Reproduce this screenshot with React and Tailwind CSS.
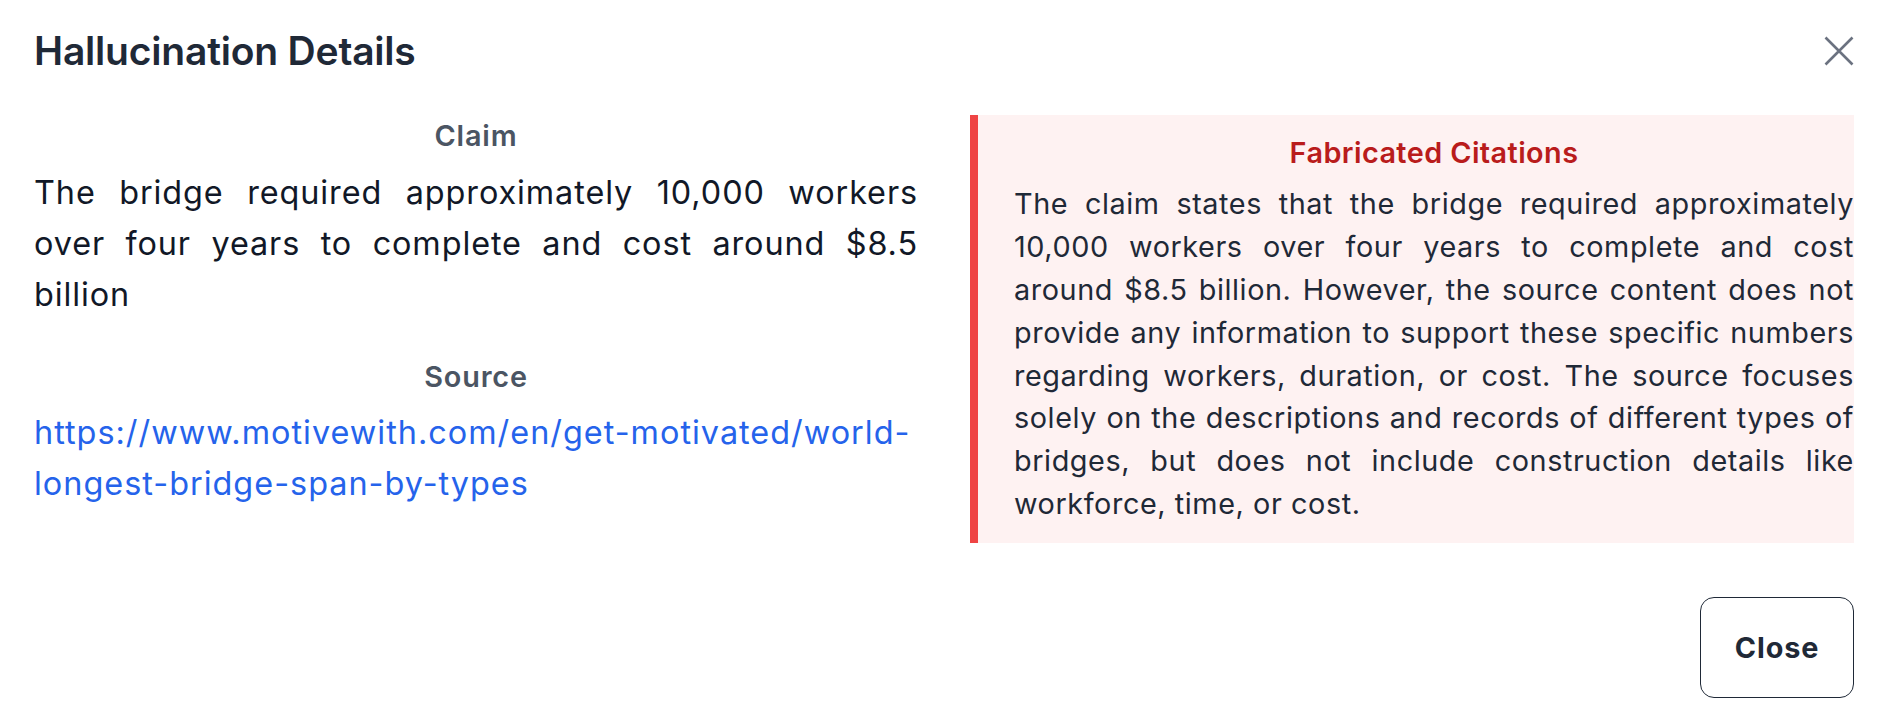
export default function App() {
  return (
    <div className="w-[1882px] h-[724px] bg-white pl-[34px] pr-[28px] font-['Inter','Noto_Sans',sans-serif] flex flex-col">
      {/* Header */}
      <div className="mt-[27px] h-[48px] flex items-center justify-between">
        <h2 className="text-[39px] leading-[48px] font-semibold text-[#1f2937] tracking-[-0.2px]">
          Hallucination Details
        </h2>
        <button className="w-[30px] h-[30px] flex items-center justify-center text-[#6b7280]" aria-label="Close">
          <svg width="30" height="30" viewBox="0 0 30 30" fill="none" stroke="currentColor" strokeWidth="2.6">
            <path d="M1.5 1.5L28.5 28.5M28.5 1.5L1.5 28.5" />
          </svg>
        </button>
      </div>

      {/* Body */}
      <div className="mt-[39px] grid grid-cols-2 gap-[52px]">
        <div className="flex flex-col">
          <p className="text-center text-[28.8px] leading-[43.2px] font-semibold tracking-[0.03em] text-[#4b5563]">Claim</p>
          <p className="mt-[9.5px] text-[32.4px] leading-[51px] tracking-[0.028em] text-justify text-[#111827]">
            The bridge required approximately 10,000 workers over four years to complete and cost around $8.5 billion
          </p>
          <p className="mt-[35px] text-center text-[28.8px] leading-[43.2px] font-semibold tracking-[0.03em] text-[#4b5563]">Source</p>
          <a
            href="#"
            className="mt-[9.5px] text-[32.4px] leading-[51px] tracking-[0.031em] text-[#2563eb]"
          >
            https://www.motivewith.com/en/get-motivated/world-longest-bridge-span-by-types
          </a>
        </div>

        <div className="mt-[1px] self-start border-l-[8px] border-[#ef4444] bg-[#fef2f2] pl-[36px] pt-[16px] pb-[17px]">
          <p className="text-center text-[28.8px] leading-[43.2px] font-semibold tracking-[0.015em] text-[#b91c1c]">
            Fabricated Citations
          </p>
          <p className="mt-[8.7px] text-[28.8px] leading-[42.9px] tracking-[0.02em] text-justify text-[#1f2937]">
            The claim states that the bridge required approximately 10,000 workers over four years to complete and cost around $8.5 billion. However, the source content does not provide any information to support these specific numbers regarding workers, duration, or cost. The source focuses solely on the descriptions and records of different types of bridges, but does not include construction details like workforce, time, or cost.
          </p>
        </div>
      </div>

      {/* Footer */}
      <div className="mt-[54px] flex justify-end">
        <button className="w-[154px] h-[101px] rounded-[14px] border-[1.8px] border-[#1f2937] text-[28.8px] font-bold tracking-[0.03em] text-[#1f2937]">
          Close
        </button>
      </div>
    </div>
  );
}
